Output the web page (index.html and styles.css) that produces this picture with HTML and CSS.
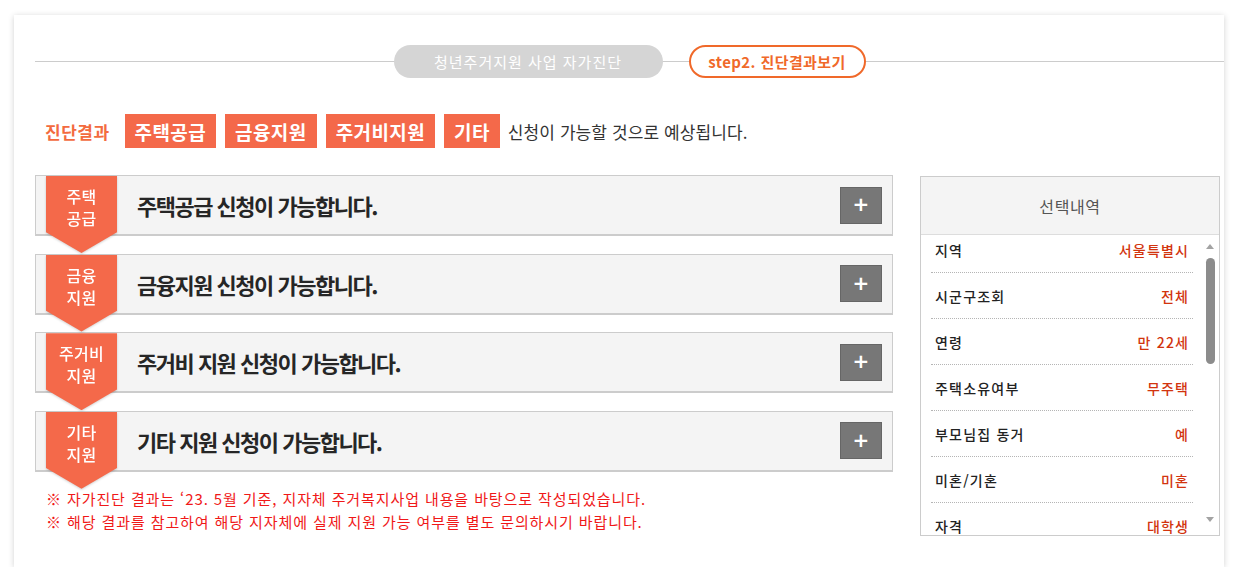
FILE: index.html
```html
<!DOCTYPE html>
<html lang="ko">
<head>
<meta charset="utf-8">
<title>진단결과</title>
<link rel="stylesheet" href="styles.css">
</head>
<body>
<div class="card">
  <div class="steps">
    <span class="pill pill-done">청년주거지원 사업 자가진단</span>
    <span class="pill pill-current">step2. 진단결과보기</span>
  </div>

  <div class="result">
    <span class="result-label">진단결과</span>
    <span class="tag">주택공급</span>
    <span class="tag">금융지원</span>
    <span class="tag">주거비지원</span>
    <span class="tag">기타</span>
    <span class="result-text">신청이 가능할 것으로 예상됩니다.</span>
  </div>

  <div class="main">
    <div class="left">
      <div class="acc">
        <div class="acc-item">
          <div class="ribbon"><span>주택<br>공급</span></div>
          <div class="acc-title">주택공급 신청이 가능합니다.</div>
          <button class="plus">+</button>
        </div>
        <div class="acc-item">
          <div class="ribbon"><span>금융<br>지원</span></div>
          <div class="acc-title">금융지원 신청이 가능합니다.</div>
          <button class="plus">+</button>
        </div>
        <div class="acc-item">
          <div class="ribbon"><span>주거비<br>지원</span></div>
          <div class="acc-title">주거비 지원 신청이 가능합니다.</div>
          <button class="plus">+</button>
        </div>
        <div class="acc-item">
          <div class="ribbon"><span>기타<br>지원</span></div>
          <div class="acc-title">기타 지원 신청이 가능합니다.</div>
          <button class="plus">+</button>
        </div>
      </div>
      <div class="notes">
        <p>※ 자가진단 결과는 ‘23. 5월 기준, 지자체 주거복지사업 내용을 바탕으로 작성되었습니다.</p>
        <p>※ 해당 결과를 참고하여 해당 지자체에 실제 지원 가능 여부를 별도 문의하시기 바랍니다.</p>
      </div>
    </div>

    <div class="panel">
      <div class="panel-head">선택내역</div>
      <div class="panel-body">
        <ul class="sel-list">
          <li><span class="k">지역</span><span class="v">서울특별시</span></li>
          <li><span class="k">시군구조회</span><span class="v">전체</span></li>
          <li><span class="k">연령</span><span class="v">만 22세</span></li>
          <li><span class="k">주택소유여부</span><span class="v">무주택</span></li>
          <li><span class="k">부모님집 동거</span><span class="v">예</span></li>
          <li><span class="k">미혼/기혼</span><span class="v">미혼</span></li>
          <li><span class="k">자격</span><span class="v">대학생</span></li>
        </ul>
        <div class="scrollbar">
          <span class="arrow-up"></span>
          <span class="thumb"></span>
          <span class="arrow-down"></span>
        </div>
      </div>
    </div>
  </div>
</div>
</body>
</html>
```

FILE: styles.css
```css
* { box-sizing: border-box; }
html, body { margin: 0; padding: 0; background: #fff; }
body {
  font-family: "Noto Sans CJK KR", "Noto Sans", sans-serif;
  color: #222;
  padding: 15px 0 0 14px;
}
.card {
  width: 1210px;
  height: 552px;
  background: #fff;
  box-shadow: 0 1px 6px rgba(0,0,0,0.18);
  padding: 30px 0 0 21px;
}
.steps {
  display: flex;
  justify-content: center;
  gap: 26px;
  height: 33px;
  background: linear-gradient(#cccccc, #cccccc) center / 100% 1px no-repeat;
}
.pill {
  display: flex;
  align-items: center;
  justify-content: center;
  height: 33px;
  border-radius: 17px;
  font-size: 15px;
}
.pill-done {
  width: 269px;
  background: #d5d5d5;
  color: #fff;
  letter-spacing: 1px;
}
.pill-current {
  width: 177px;
  background: #fff;
  border: 2px solid #f0692a;
  color: #f0692a;
  font-weight: 700;
  letter-spacing: 0.4px;
}
.result {
  display: flex;
  align-items: center;
  height: 34px;
  margin: 36px 0 0 10px;
}
.result-label {
  color: #f36b3f;
  font-weight: 700;
  font-size: 17px;
  letter-spacing: 0.5px;
  margin-right: 15px;
}
.tag {
  display: flex;
  align-items: center;
  height: 34px;
  padding: 0 10px;
  margin-right: 9px;
  background: #f4694a;
  color: #fff;
  font-weight: 700;
  font-size: 19px;
  letter-spacing: 0.4px;
}
.result-text {
  font-size: 17px;
  letter-spacing: 0.1px;
  color: #333;
  margin-left: -1px;
}
.main {
  display: flex;
  gap: 27px;
  margin-top: 27px;
}
.left { width: 858px; }
.acc {
  display: flex;
  flex-direction: column;
  gap: 17.6px;
}
.acc-item {
  position: relative;
  display: flex;
  align-items: center;
  height: 61px;
  background: #f4f4f4;
  border: 1px solid #cccccc;
  border-bottom-width: 2px;
  padding: 0 10px 0 101px;
}
.ribbon {
  position: absolute;
  left: 10px;
  top: 0;
  width: 71px;
  height: 77px;
  filter: drop-shadow(0 1px 1px rgba(0,0,0,0.18));
  z-index: 2;
}
.ribbon span {
  display: block;
  height: 100%;
  background: #f4694a;
  clip-path: polygon(0 0, 100% 0, 100% 73%, 50% 100%, 0 73%);
  color: #fff;
  font-size: 16px;
  font-weight: 500;
  line-height: 22px;
  text-align: center;
  padding-top: 9px;
  letter-spacing: 0.3px;
}
.acc-title {
  flex: 1;
  font-size: 22px;
  font-weight: 700;
  letter-spacing: -1.5px;
  color: #262626;
}
.plus {
  width: 42px;
  height: 37px;
  background: #777;
  border: 1px solid #666;
  color: #fff;
  font-size: 20px;
  font-weight: 700;
  line-height: 1;
  padding: 0 0 2px;
  font-family: "DejaVu Sans", sans-serif;
}
.notes {
  margin: 15px 0 0 11px;
}
.notes p {
  margin: 0;
  font-size: 15px;
  line-height: 23px;
  color: #f01818;
  letter-spacing: 0.9px;
}
.panel {
  width: 300px;
  height: 360px;
  margin-top: 1px;
  border: 1px solid #cccccc;
  display: flex;
  flex-direction: column;
}
.panel-head {
  height: 58px;
  flex: none;
  background: #f4f4f4;
  border-bottom: 1px solid #dddddd;
  display: flex;
  align-items: center;
  justify-content: center;
  font-size: 16px;
  color: #555;
  letter-spacing: 0.6px;
}
.panel-body {
  flex: 1;
  position: relative;
  overflow: hidden;
}
.sel-list {
  list-style: none;
  margin: -8px 0 0 10px;
  padding: 0;
  width: 262px;
}
.sel-list li {
  display: flex;
  justify-content: space-between;
  align-items: center;
  height: 46px;
  border-bottom: 1px dotted #b5b5b5;
  padding: 0 5px 0 4px;
  font-size: 14px;
  letter-spacing: 1.2px;
}
.k { color: #222; font-weight: 500; }
.v { color: #d2340e; font-weight: 500; margin-right: -1.2px; }
.scrollbar {
  position: absolute;
  right: 2px;
  top: 0;
  bottom: 0;
  width: 14px;
  background: #fff;
}
.arrow-up, .arrow-down {
  position: absolute;
  left: 3px;
  width: 0;
  height: 0;
  border-left: 4px solid transparent;
  border-right: 4px solid transparent;
}
.arrow-up { top: 9px; border-bottom: 5px solid #a3a3a3; }
.arrow-down { bottom: 13px; border-top: 5px solid #a3a3a3; }
.thumb {
  position: absolute;
  left: 3px;
  top: 23px;
  width: 9px;
  height: 106px;
  border-radius: 5px;
  background: #8c8c8c;
}
```
